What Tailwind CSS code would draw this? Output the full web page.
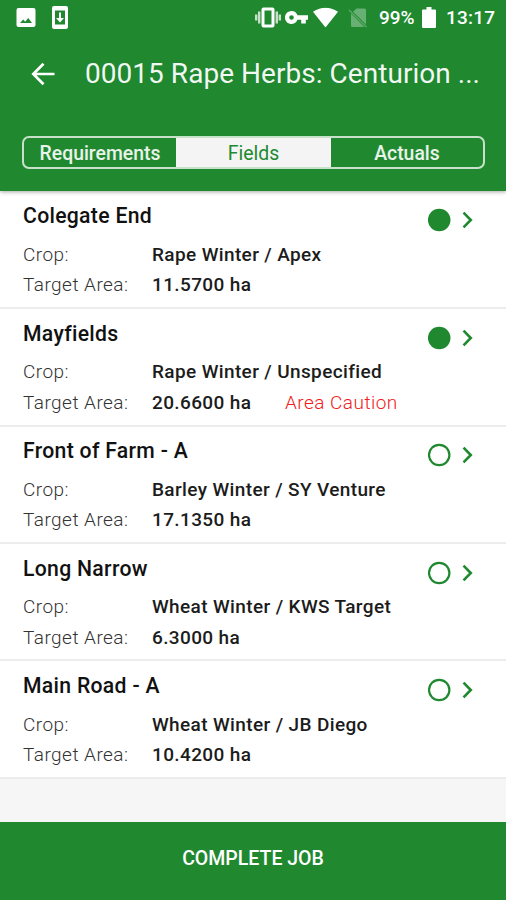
<!DOCTYPE html>
<html lang="en">
<head>
<meta charset="utf-8">
<title>Fields</title>
<script src="https://cdn.jsdelivr.net/npm/@tailwindcss/browser@4"></script>
</head>
<body class="w-[506px] h-[900px] overflow-hidden bg-[#f6f6f6] font-['Roboto',sans-serif] flex flex-col">
<header class="relative z-10 h-[191px] shrink-0 bg-[#208930] text-white shadow-[0_1px_4px_rgba(0,0,0,0.35)]">
  <div class="h-[36px] flex items-center justify-between pl-[16px] pr-[11px]">
    <div class="flex items-center gap-[16px]">
      <svg class="w-[20px] h-[20px]" viewBox="0 0 20 20"><path fill="#fff" fill-rule="evenodd" d="M2.500 0h15a2 2 0 0 1 2 2v15a2 2 0 0 1-2 2h-15a2 2 0 0 1-2-2V2a2 2 0 0 1 2-2zM4 15h12l-3.800-5-3 3.800-2-2.300z"/></svg>
      <svg class="w-[16px] h-[24px] -translate-y-[0.500px]" viewBox="0 0 16 24"><path fill="#fff" fill-rule="evenodd" d="M2 .5h12a2 2 0 0 1 2 2v19a2 2 0 0 1-2 2H2a2 2 0 0 1-2-2v-19a2 2 0 0 1 2-2zM3 5v14h10V5zM7 7h2v5.500h3L8 17l-4-4.500h3z"/></svg>
    </div>
    <div class="flex items-center">
      <svg class="w-[26px] h-[22px] -translate-y-[0.500px]" viewBox="0 0 26 22"><path fill="#fff" fill-rule="evenodd" d="M8.500 1h9a2 2 0 0 1 2 2v16a2 2 0 0 1-2 2h-9a2 2 0 0 1-2-2V3a2 2 0 0 1 2-2zM9.500 4v14h7V4z"/><path d="M1.200 8v6M4.200 5v12M21.800 5v12M24.800 8v6" stroke="#fff" stroke-opacity=".75" stroke-width="2.400"/></svg>
      <svg class="ml-[4px] w-[23px] h-[14px] -translate-y-[0.500px]" viewBox="0 0 23 14"><path fill="#fff" fill-rule="evenodd" d="M6.500 .5a6.500 6.500 0 0 1 6 4.200H23v4.600h-2.200V13h-4.600V9.300h-3.700A6.500 6.500 0 1 1 6.500 .5zm0 4.200a2.300 2.300 0 1 0 0 4.600 2.300 2.300 0 0 0 0-4.600z"/></svg>
      <svg class="ml-[5px] w-[25px] h-[20px] -translate-y-[0.500px]" viewBox="0 0 25 20"><path fill="#fff" d="M0 4.200Q12.500-3.500 25 4.200L12.500 20z"/></svg>
      <svg class="ml-[10px] w-[20px] h-[20px]" viewBox="0 0 20 20"><path fill="#fff" fill-opacity=".32" d="M8.500 .5h8A1.500 1.500 0 0 1 18 2v14.500L5 3.800zM3 5.500L16 18.500q-.5 .5-1 .5H4.500A1.500 1.500 0 0 1 3 17.500z"/><path d="M1 2l17.500 17" stroke="#fff" stroke-opacity=".25" stroke-width="1.500"/></svg>
      <span class="ml-[11px] w-[38px] text-[19px] leading-[24px] font-medium whitespace-nowrap">99%</span>
      <svg class="ml-[5px] w-[14px] h-[22px] -translate-y-[0.500px]" viewBox="0 0 14 22"><path fill="#fff" d="M4.500 .5h5V3H13a1 1 0 0 1 1 1v16.500a1 1 0 0 1-1 1H1a1 1 0 0 1-1-1V4a1 1 0 0 1 1-1h3.500z"/></svg>
      <span class="ml-[10px] w-[49px] text-[19px] leading-[24px] font-medium tracking-[0.200px] whitespace-nowrap">13:17</span>
    </div>
  </div>
  <div class="h-[76px] flex items-center pl-[31px]">
    <svg class="w-[24px] h-[24px]" viewBox="0 0 24 24" fill="none" stroke="#fff" stroke-width="2.700"><path d="M23.500 12H2.500M12.500 1.800L2.300 12l10.200 10.200"/></svg>
    <h1 class="ml-[30px] text-[28px] leading-[36px] tracking-[0.040px] whitespace-nowrap text-white/95">00015 Rape Herbs: Centurion ...</h1>
  </div>
  <div class="mt-[24px] ml-[22px] mr-[21px] h-[33px] rounded-[7px] border-2 border-white/75 grid grid-cols-[152px_155px_1fr] overflow-hidden text-[19.400px] font-medium text-white/90">
    <div class="flex items-center justify-center pt-px">Requirements</div>
    <div class="flex items-center justify-center pt-px bg-[#f4f4f4] text-[#208930] font-normal">Fields</div>
    <div class="flex items-center justify-center pt-px">Actuals</div>
  </div>
</header>
<main id="list" class="shrink-0 pt-[0.900px] bg-white"></main>
<footer class="mt-auto h-[78px] shrink-0 bg-[#208930] text-white flex items-center justify-center text-[19.500px] font-medium pb-[4px]">COMPLETE JOB</footer>
<script>
const fields = [
  ['Colegate End', 'Rape Winter / Apex', '11.5700 ha', true],
  ['Mayfields', 'Rape Winter / Unspecified', '20.6600 ha', true, 'Area Caution'],
  ['Front of Farm - A', 'Barley Winter / SY Venture', '17.1350 ha', false],
  ['Long Narrow', 'Wheat Winter / KWS Target', '6.3000 ha', false],
  ['Main Road - A', 'Wheat Winter / JB Diego', '10.4200 ha', false]
];
document.getElementById('list').innerHTML = fields.map(([name, crop, area, done, note]) => `
<section class="h-[117.400px] bg-white border-b-2 border-[#ececec] pt-[9.500px] pl-[23px] pr-[32px] flex justify-between">
  <div>
    <h2 class="text-[21.200px] leading-[30px] font-medium tracking-[0.300px] text-[#111] whitespace-nowrap">${name}</h2>
    <div class="mt-[8.700px] grid grid-cols-[129px_auto] text-[19px] leading-[30.300px] whitespace-nowrap">
      <span class="font-light text-[#333] tracking-[0.460px]">Crop:</span>
      <span class="font-medium text-[#1c1c1c] tracking-[0.370px]">${crop}</span>
      <span class="font-light text-[#333] tracking-[0.460px]">Target Area:</span>
      <span class="flex"><span class="w-[133px] font-medium text-[#1c1c1c] tracking-[0.370px]">${area}</span>${note ? `<span class="text-[#f02020] font-light tracking-[0.460px]">${note}</span>` : ''}</span>
    </div>
  </div>
  <svg class="mt-[7px] w-[46px] h-[24px] shrink-0" viewBox="0 0 46 24"><circle cx="11.200" cy="12" r="10.200" fill="${done ? '#208930' : 'none'}" stroke="#208930" stroke-width="2.200"/><path d="M35.500 4.700L42.800 12l-7.300 7.300" fill="none" stroke="#208930" stroke-width="2.600"/></svg>
</section>`).join('');
</script>
</body>
</html>
